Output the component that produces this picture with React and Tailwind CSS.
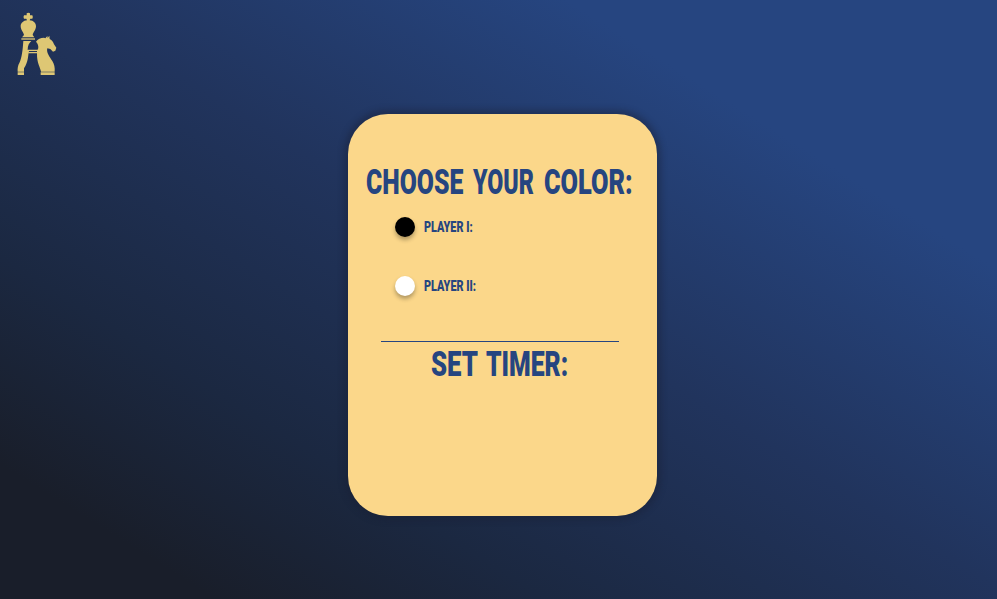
import { useLayoutEffect, useRef, useState } from "react";

// Condenses a word horizontally so that it fills the width of its box.
function Condensed({ className, children }) {
  const box = useRef(null);
  const text = useRef(null);
  const [scale, setScale] = useState(0.7);
  useLayoutEffect(() => {
    setScale(box.current.clientWidth / text.current.offsetWidth);
  }, []);
  return (
    <span ref={box} className={`block ${className}`}>
      <span
        ref={text}
        className="inline-block origin-left whitespace-nowrap"
        style={{ transform: `scaleX(${scale})` }}
      >
        {children}
      </span>
    </span>
  );
}

function Logo() {
  return (
    <svg className="h-[76px] w-[56px]" viewBox="0 0 168 228" fill="#dec774">
      <path d="M50 25Q55 21 60 25V31H67Q70 36 67 41H61L59 46C71 47 78 54 78 64C78 75 69 82 68 90L73 97H36L42 90C41 82 32 75 32 64C32 54 40 47 51 46L49 41H42Q39 36 42 31H50Z" />
      <path d="M34 100H75V104H34Z" />
      <path d="M40 108H64C57 114 53 122 53 134L57 139C54 150 55 172 42 190V200H23C22 190 24 181 28 174C36 158 38 135 40 108Z" />
      <path d="M54 134H84V138H54ZM55 141H84V145H55Z" />
      <path d="M78 110C83 102 92 98 102 98L106 100L112 93L113 99L118 92L119 102C126 105 130 111 132 118L139 128L136 137L129 140L121 132L112 130C108 142 119 156 127 168C133 178 135 188 134 200H93C92 190 80 174 81 145V137C88 130 85 117 78 110Z" />
      <path d="M23 202H42V210H23ZM92 202H134V210H92Z" />
    </svg>
  );
}

function Player({ discClass, labelClass, label }) {
  return (
    <div className="flex h-5 items-center gap-[9px]">
      <span className={`size-5 rounded-full shadow-[0_3px_4px_rgba(0,0,0,0.3)] ${discClass}`} />
      <Condensed className={`text-[15px] leading-5 ${labelClass}`}>{label}</Condensed>
    </div>
  );
}

export default function App() {
  return (
    <div className="flex h-[599px] w-[997px] flex-col overflow-hidden bg-[linear-gradient(32deg,#191e2a_11%,#1b2841_28%,#21345d_52%,#264580_78%)] font-['Roboto','Liberation_Sans',sans-serif] font-black text-[#264580]">
      <header className="h-[114px] pt-[5px] pl-[10px]">
        <Logo />
      </header>
      <main className="ml-[348px] h-[402px] w-[309px] rounded-[40px] bg-[#fbd78a] pt-[49px] shadow-[0_0_6px_4px_rgba(25,30,50,0.4)]">
        <h1 className="ml-[18px] flex h-10 gap-[10px] text-[35px] leading-10">
          <Condensed className="w-[97px]">CHOOSE</Condensed>
          <Condensed className="w-[61px]">YOUR</Condensed>
          <Condensed className="w-[89px]">COLOR:</Condensed>
        </h1>
        <section className="mt-[14px] ml-[47px] flex flex-col gap-[39px]">
          <Player discClass="bg-black" labelClass="w-[49px]" label="PLAYER I:" />
          <Player discClass="bg-white" labelClass="w-[52px]" label="PLAYER II:" />
        </section>
        <section className="mt-[45px] ml-[33px] w-[238px] border-t border-[#264580]">
          <h2 className="mt-[3px] ml-[50px] flex h-10 gap-[8px] text-[35px] leading-10">
            <Condensed className="w-[47px]">SET</Condensed>
            <Condensed className="w-[82px]">TIMER:</Condensed>
          </h2>
        </section>
      </main>
    </div>
  );
}
